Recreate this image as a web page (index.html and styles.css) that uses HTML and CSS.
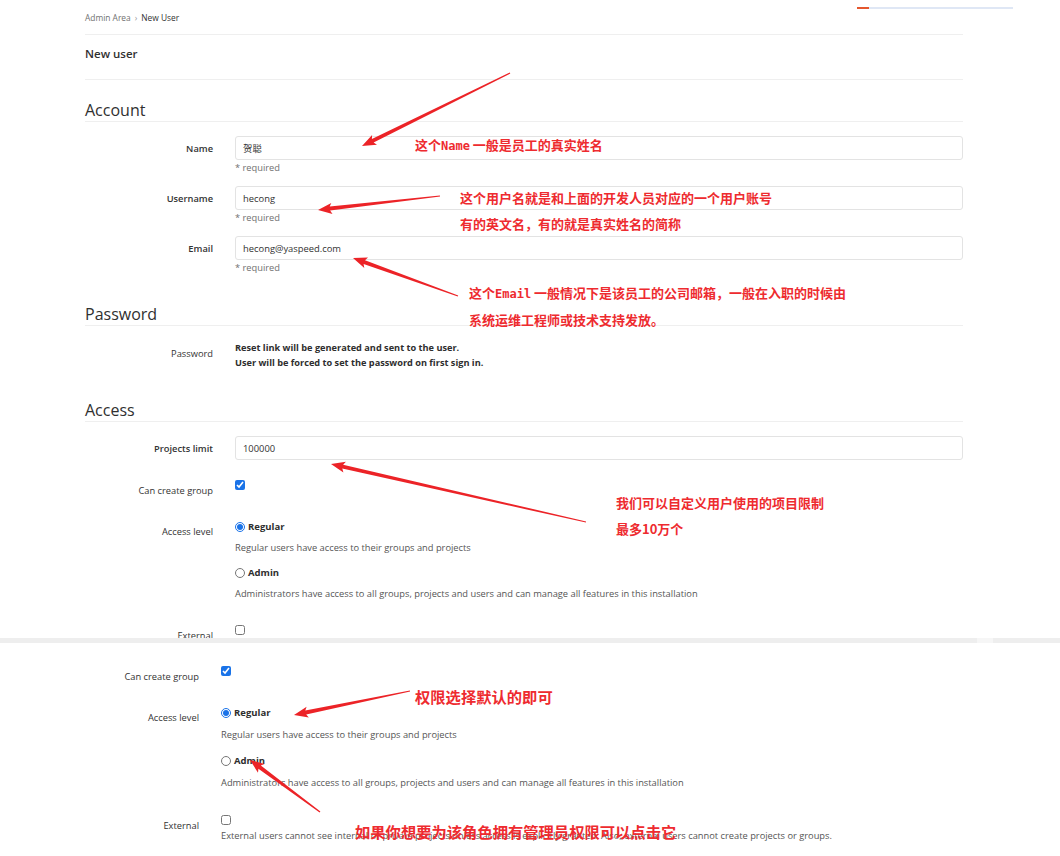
FILE: index.html
```html
<!DOCTYPE html>
<html lang="zh-CN">
<head>
    <meta charset="UTF-8">
    <meta name="viewport" content="width=device-width, initial-scale=1.0">
    <title>New User · Admin Area</title>
    <link rel="stylesheet" href="styles.css">
</head>
<body>
    <!-- primeira captura -->
    <div class="shot shot-top">
        <div class="header-edge"><span></span></div>
        <div class="page">
            <div class="crumbs">
                <span class="crumb">Admin Area</span>
                <span class="sep">›</span>
                <span class="crumb current">New User</span>
            </div>
            <div class="page-title">New user</div>

            <h3 class="section-title">Account</h3>
            <div class="row">
                <label class="row-label strong">Name</label>
                <div class="row-control">
                    <input class="field" type="text" value="贺聪">
                    <div class="help">* required</div>
                </div>
            </div>
            <div class="row">
                <label class="row-label strong">Username</label>
                <div class="row-control">
                    <input class="field" type="text" value="hecong">
                    <div class="help">* required</div>
                </div>
            </div>
            <div class="row">
                <label class="row-label strong">Email</label>
                <div class="row-control">
                    <input class="field" type="text" value="hecong@yaspeed.com">
                    <div class="help">* required</div>
                </div>
            </div>

            <h3 class="section-title">Password</h3>
            <div class="row">
                <label class="row-label password-label">Password</label>
                <div class="row-control password-note">
                    <div>Reset link will be generated and sent to the user.</div>
                    <div>User will be forced to set the password on first sign in.</div>
                </div>
            </div>

            <h3 class="section-title">Access</h3>
            <div class="row">
                <label class="row-label strong">Projects limit</label>
                <div class="row-control">
                    <input class="field" type="text" value="100000">
                </div>
            </div>
            <div class="row">
                <label class="row-label check-label">Can create group</label>
                <div class="row-control check-control">
                    <input class="box" type="checkbox" checked>
                </div>
            </div>
            <div class="row">
                <label class="row-label level-label">Access level</label>
                <div class="row-control level-control">
                    <div class="option"><input class="box" type="radio" name="level1" checked><b>Regular</b></div>
                    <div class="option-desc">Regular users have access to their groups and projects</div>
                    <div class="option option-next"><input class="box" type="radio" name="level1"><b>Admin</b></div>
                    <div class="option-desc">Administrators have access to all groups, projects and users and can manage all features in this installation</div>
                </div>
            </div>
            <div class="row">
                <label class="row-label external-label">External</label>
                <div class="row-control external-control">
                    <input class="box" type="checkbox">
                </div>
            </div>
        </div>
    </div>

    <div class="divider"><span></span></div>

    <!-- segunda captura -->
    <div class="shot shot-bottom">
        <div class="page page-shifted">
            <div class="row">
                <label class="row-label check-label">Can create group</label>
                <div class="row-control check-control">
                    <input class="box" type="checkbox" checked>
                </div>
            </div>
            <div class="row row-loose">
                <label class="row-label level-label">Access level</label>
                <div class="row-control level-control">
                    <div class="option"><input class="box" type="radio" name="level2" checked><b>Regular</b></div>
                    <div class="option-desc">Regular users have access to their groups and projects</div>
                    <div class="option option-next"><input class="box" type="radio" name="level2"><b>Admin</b></div>
                    <div class="option-desc">Administrators have access to all groups, projects and users and can manage all features in this installation</div>
                </div>
            </div>
            <div class="row">
                <label class="row-label external-label external-label-low">External</label>
                <div class="row-control external-control external-control-low">
                    <input class="box" type="checkbox">
                    <div class="external-desc">External users cannot see internal or private projects unless access is explicitly granted. Also, external users cannot create projects or groups.</div>
                </div>
            </div>
        </div>
    </div>

    <!-- anotações -->
    <svg class="arrows" id="arrows" width="1060" height="856" viewBox="0 0 1060 856"></svg>
    <div class="note note-name">这个<span class="mono">Name</span> 一般是员工的真实姓名</div>
    <div class="note note-user">这个用户名就是和上面的开发人员对应的一个用户账号<br>有的英文名，有的就是真实姓名的简称</div>
    <div class="note note-email">这个<span class="mono">Email</span> 一般情况下是该员工的公司邮箱，一般在入职的时候由<br>系统运维工程师或技术支持发放。</div>
    <div class="note note-limit">我们可以自定义用户使用的项目限制<br>最多10万个</div>
    <div class="note note-big note-regular">权限选择默认的即可</div>
    <div class="note note-big note-admin">如果你想要为该角色拥有管理员权限可以点击它</div>

    <script>
        // setas: [x da cauda, y da cauda, x da ponta, y da ponta]
        const arrows = [
            [510, 73, 362, 146],
            [440, 196, 318, 210],
            [458, 296, 353, 258],
            [586, 522, 331, 464],
            [410, 691, 294, 715],
            [320, 812, 250, 760]
        ];

        function arrowPoints(x1, y1, x2, y2) {
            const dx = x2 - x1, dy = y2 - y1;
            const len = Math.hypot(dx, dy);
            const ux = dx / len, uy = dy / len;
            const nx = -uy, ny = ux;
            const headLen = 12, tail = 0.6, neck = 2, wing = 5.5;
            const bx = x2 - ux * headLen, by = y2 - uy * headLen;
            const pts = [
                [x1 + nx * tail, y1 + ny * tail],
                [bx + nx * neck, by + ny * neck],
                [bx - ux * 2 + nx * wing, by - uy * 2 + ny * wing],
                [x2, y2],
                [bx - ux * 2 - nx * wing, by - uy * 2 - ny * wing],
                [bx - nx * neck, by - ny * neck],
                [x1 - nx * tail, y1 - ny * tail]
            ];
            return pts.map(p => p[0].toFixed(1) + ',' + p[1].toFixed(1)).join(' ');
        }

        const svg = document.getElementById('arrows');
        arrows.forEach(a => {
            const poly = document.createElementNS('http://www.w3.org/2000/svg', 'polygon');
            poly.setAttribute('points', arrowPoints(a[0], a[1], a[2], a[3]));
            poly.setAttribute('class', 'arrow');
            svg.appendChild(poly);
        });
    </script>
</body>
</html>
```

FILE: styles.css
```css
body {
    margin: 0;
    padding: 0;
    background-color: #ffffff;
    font-family: 'Open Sans', 'Noto Sans CJK SC', sans-serif;
    font-size: 9.3px;
    color: #333333;
    position: relative;
    width: 1060px;
    height: 856px;
    overflow: hidden;
}
.shot {
    overflow: hidden;
}
.shot-top {
    height: 638px;
}
.shot-bottom {
    height: 213px;
    padding-top: 16px;
    box-sizing: border-box;
}
.header-edge {
    height: 9px;
    padding-left: 857px;
    padding-top: 7px;
    box-sizing: border-box;
}
.header-edge span {
    display: block;
    width: 156px;
    height: 2px;
    background: linear-gradient(to right, #e4572e 0, #e4572e 12px, #dfe7f5 12px);
}
.page {
    margin-left: 85px;
    width: 878px;
    display: flex;
    flex-direction: column;
}
.page-shifted {
    margin-left: 71px;
}
.crumbs {
    padding: 3px 0 10px;
    line-height: 12px;
    font-size: 8.4px;
    color: #707070;
    border-bottom: 1px solid #efefef;
    display: flex;
    gap: 4px;
}
.crumbs .current {
    color: #333333;
}
.crumbs .sep {
    color: #999999;
}
.page-title {
    padding: 12px 0 18px;
    line-height: 14px;
    font-size: 11.5px;
    font-weight: 600;
    color: #303030;
    border-bottom: 1px solid #efefef;
    margin-bottom: 2px;
}
.section-title {
    margin: 18px 0 14px;
    padding-bottom: 1px;
    line-height: 20px;
    font-size: 16px;
    font-weight: 400;
    color: #303030;
    border-bottom: 1px solid #efefef;
}
.row {
    display: grid;
    grid-template-columns: 128px 1fr;
    column-gap: 22px;
    margin-bottom: 12px;
}
.row-loose {
    margin-bottom: 14px;
}
.row-label {
    text-align: right;
    line-height: 24px;
    color: #333333;
}
.row-label.strong {
    font-weight: 600;
    padding-top: 1px;
}
.field {
    display: block;
    box-sizing: border-box;
    width: 100%;
    height: 24px;
    margin: 0;
    padding: 0 7px;
    border: 1px solid #e3e3e3;
    border-radius: 3px;
    font-family: 'Open Sans', 'Noto Sans CJK SC', sans-serif;
    font-size: 9.4px;
    color: #333333;
    background-color: #ffffff;
    outline: none;
}
.help {
    margin-top: 2px;
    line-height: 12px;
    color: #707070;
}
.password-label {
    padding-top: 6px;
    line-height: 15px;
}
.password-note {
    line-height: 15px;
    font-weight: 700;
    font-size: 9.2px;
    color: #2e2e2e;
}
.box {
    display: block;
    width: 10px;
    height: 10px;
    margin: 0;
    accent-color: #1a73e8;
}
.check-label {
    padding-top: 12px;
    line-height: 12px;
}
.check-control {
    padding-top: 7px;
}
.level-label {
    padding-top: 17px;
    line-height: 12px;
}
.level-control {
    padding-top: 12px;
}
.option {
    display: flex;
    align-items: center;
    gap: 3px;
    line-height: 12px;
    font-size: 9.5px;
}
.option b {
    font-weight: 700;
    color: #2e2e2e;
}
.option-next {
    margin-top: 13px;
}
.option-desc {
    margin-top: 9px;
    line-height: 12px;
    color: #555555;
}
.row-loose .option-next {
    margin-top: 14px;
}
.row-loose .option-desc {
    margin-top: 10px;
}
.external-label {
    padding-top: 18px;
    line-height: 12px;
}
.external-control {
    padding-top: 13px;
}
.external-label-low {
    padding-top: 17px;
}
.external-control-low {
    padding-top: 12px;
}
.external-desc {
    margin-top: 5px;
    line-height: 12px;
    color: #555555;
}
.divider {
    height: 5px;
    background-color: #eeeeee;
}
.divider span {
    display: block;
    margin-left: 977px;
    width: 16px;
    height: 5px;
    background-color: #f6f6f6;
}

/* anotações em vermelho */
.arrows {
    position: absolute;
    left: 0;
    top: 0;
    pointer-events: none;
}
.arrow {
    fill: #ec2327;
}
.note {
    position: absolute;
    font-family: 'Noto Sans CJK SC', sans-serif;
    font-weight: 700;
    font-size: 13px;
    line-height: 26px;
    color: #ee2b2f;
    white-space: nowrap;
}
.note .mono {
    font-family: 'DejaVu Sans Mono', 'Liberation Mono', monospace;
    font-weight: 700;
    font-size: 12px;
}
.note-big {
    font-size: 15.3px;
    line-height: 18px;
}
.note-name {
    left: 415px;
    top: 132px;
}
.note-user {
    left: 460px;
    top: 185px;
}
.note-email {
    left: 469px;
    top: 280px;
}
.note-limit {
    left: 616px;
    top: 490px;
}
.note-regular {
    left: 415px;
    top: 687px;
}
.note-admin {
    left: 355px;
    top: 822px;
}
```
